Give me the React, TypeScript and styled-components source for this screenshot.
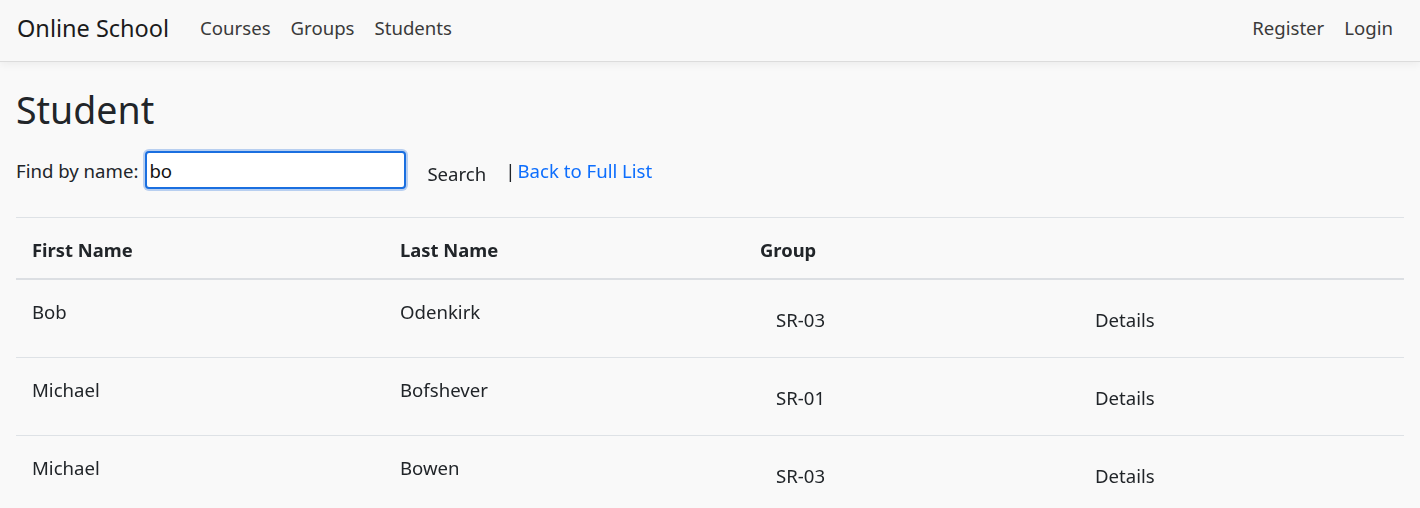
import React from "react";
import styled, { createGlobalStyle } from "styled-components";

const GlobalStyle = createGlobalStyle`
  html, body { margin: 0; padding: 0; }
  body {
    background: #f9f9f9;
    font-family: "Noto Sans", "Open Sans", sans-serif;
    color: #212529;
    font-size: 18.6px;
  }
  * { box-sizing: border-box; }
`;

const Navbar = styled.nav`
  height: 62px;
  background: #f8f8f8;
  border-bottom: 1px solid #dcdcdc;
  box-shadow: 0 3px 8px rgba(0, 0, 0, 0.05);
  display: flex;
  align-items: center;
  padding: 0 17px 6px;
  position: relative;
`;

const Brand = styled.a`
  font-size: 23.5px;
  color: #1b1b1b;
  margin-right: 21px;
  text-decoration: none;
`;

const NavList = styled.div<{ $grow?: boolean }>`
  display: flex;
  flex: ${(p) => (p.$grow ? 1 : "none")};
`;

const NavLink = styled.a`
  font-size: 18.6px;
  color: #3a3a3a;
  padding: 0 10px;
  text-decoration: none;
`;

const Main = styled.main`
  padding: 0 16px;
`;

const Title = styled.h1`
  font-size: 37.5px;
  font-weight: 400;
  margin: 0;
  padding-top: 22px;
  line-height: 52px;
  color: #212529;
`;

const SearchForm = styled.form`
  display: flex;
  align-items: center;
  height: 40px;
  margin-top: 14px;
`;

const Label = styled.label`
  margin-right: 7px;
`;

const Input = styled.input`
  width: 261px;
  height: 38px;
  border: 2px solid #1a6fe0;
  border-radius: 4px;
  box-shadow: 0 0 0 2px #b8cff0;
  background: #fff;
  font-family: inherit;
  font-size: 18.6px;
  padding: 0 2px;
  color: #111;
  outline: none;
`;

const SearchButton = styled.button`
  border: none;
  background: transparent;
  font-family: inherit;
  font-size: 18.6px;
  color: #212529;
  margin-left: 21px;
  margin-top: 6px;
  padding: 0;
`;

const Sep = styled.span`
  margin-left: 19px;
  margin-right: 2px;
`;

const Link = styled.a`
  color: #0d6efd;
  text-decoration: none;
`;

const Table = styled.table`
  width: 100%;
  border-collapse: collapse;
  margin-top: 27px;
  border-top: 1px solid #dee2e6;
`;

const HeadCell = styled.th<{ $w: number }>`
  width: ${(p) => p.$w}px;
  text-align: left;
  font-weight: 700;
  font-size: 18.4px;
  padding: 19px 16px 0;
  height: 61px;
  vertical-align: top;
  border-bottom: 2px solid #dcdfe3;
`;

const Row = styled.tr`
  height: 78.5px;
  border-bottom: 1px solid #dee2e6;
`;

const Cell = styled.td<{ $low?: boolean; $indent?: boolean }>`
  vertical-align: top;
  padding: ${(p) => (p.$low ? "28px" : "20px")} 16px 0
    ${(p) => (p.$indent ? "32px" : "16px")};
  line-height: 24px;
`;

const DetailsLink = styled.a`
  color: #212529;
  text-decoration: none;
`;

const students = [
  { first: "Bob", last: "Odenkirk", group: "SR-03" },
  { first: "Michael", last: "Bofshever", group: "SR-01" },
  { first: "Michael", last: "Bowen", group: "SR-03" },
];

export default function App() {
  return (
    <>
      <GlobalStyle />
      <Navbar>
        <Brand>Online School</Brand>
        <NavList $grow>
          <NavLink>Courses</NavLink>
          <NavLink>Groups</NavLink>
          <NavLink>Students</NavLink>
        </NavList>
        <NavList>
          <NavLink>Register</NavLink>
          <NavLink>Login</NavLink>
        </NavList>
      </Navbar>
      <Main>
        <Title>Student</Title>
        <SearchForm onSubmit={(e) => e.preventDefault()}>
          <Label>Find by name:</Label>
          <Input defaultValue="bo" autoFocus />
          <SearchButton type="submit">Search</SearchButton>
          <Sep>|</Sep>
          <Link href="#">Back to Full List</Link>
        </SearchForm>
        <Table>
          <thead>
            <tr>
              <HeadCell $w={368}>First Name</HeadCell>
              <HeadCell $w={360}>Last Name</HeadCell>
              <HeadCell $w={335}>Group</HeadCell>
              <HeadCell $w={325}></HeadCell>
            </tr>
          </thead>
          <tbody>
            {students.map((s, i) => (
              <Row key={i}>
                <Cell>{s.first}</Cell>
                <Cell>{s.last}</Cell>
                <Cell $low $indent>
                  {s.group}
                </Cell>
                <Cell $low>
                  <DetailsLink href="#">Details</DetailsLink>
                </Cell>
              </Row>
            ))}
          </tbody>
        </Table>
      </Main>
    </>
  );
}
